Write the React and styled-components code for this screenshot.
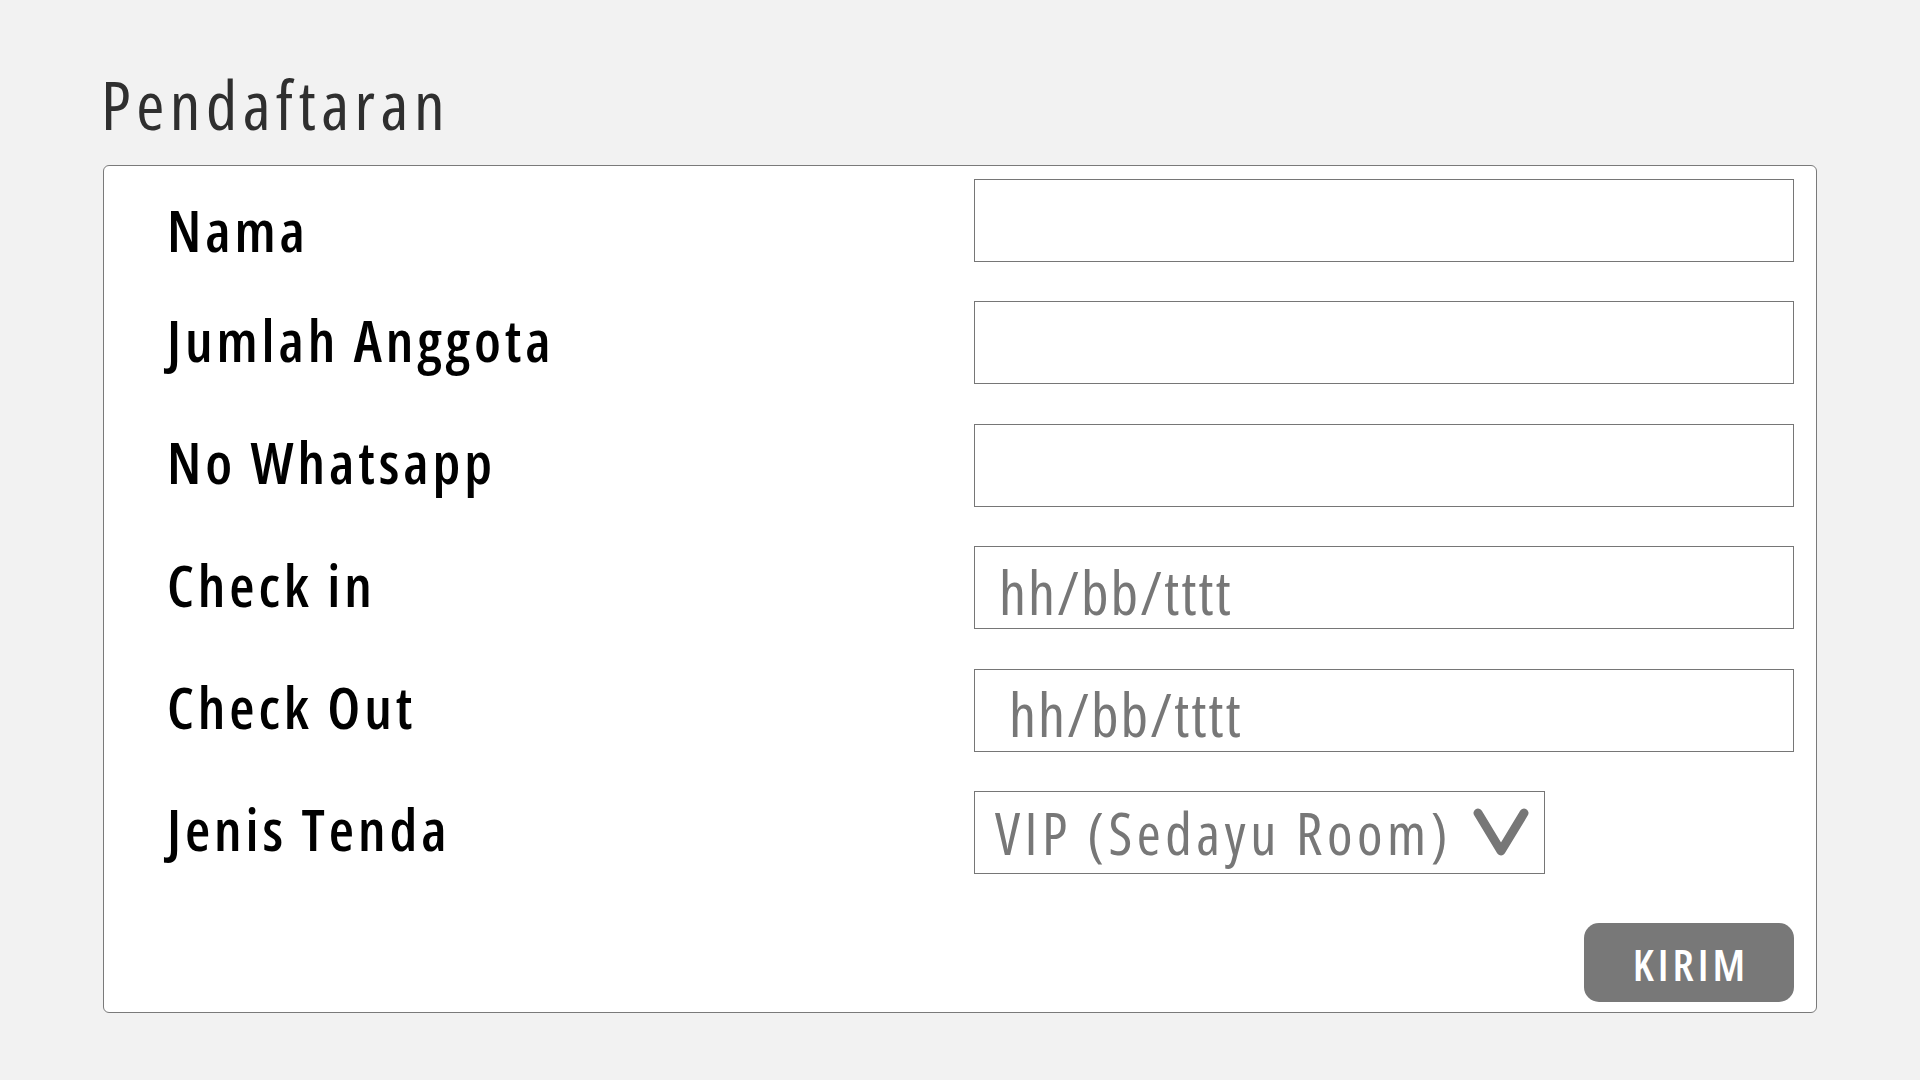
import React from "react";
import styled, { createGlobalStyle } from "styled-components";

const FONT = `"Open Sans", "Liberation Sans", sans-serif`;

const GlobalStyle = createGlobalStyle`
  html, body {
    margin: 0;
    padding: 0;
    background: #f2f2f2;
    font-family: ${FONT};
    font-stretch: 75%;
  }
`;

const Page = styled.div`
  min-height: 1080px;
  box-sizing: border-box;
  padding: 70px 103px 0 103px;
`;

const Title = styled.h1`
  margin: 0 0 27px -2px;
  font-family: ${FONT};
  font-stretch: 75%;
  font-size: 68px;
  line-height: 1;
  font-weight: 400;
  letter-spacing: 5.5px;
  color: #2f2f2f;
`;

const Card = styled.form`
  box-sizing: border-box;
  width: 1714px;
  background: #ffffff;
  border: 1px solid #7a7a7a;
  border-radius: 6px;
  padding: 13px 22px 10px 63px;
  display: flex;
  flex-direction: column;
`;

const Grid = styled.div`
  display: grid;
  grid-template-columns: 1fr 820px;
  grid-auto-rows: 83px;
  row-gap: 39.4px;
`;

const Label = styled.label`
  align-self: center;
  font-family: ${FONT};
  font-stretch: 75%;
  font-size: 58px;
  font-weight: 600;
  line-height: 1;
  letter-spacing: 3.9px;
  color: #000;
  margin-bottom: ${(p) => (p.$shift ? 0 : 6)}px;
  margin-top: ${(p) => p.$shift || 0}px;
`;

const TextField = styled.input`
  box-sizing: border-box;
  width: 100%;
  height: 83px;
  margin: 0;
  border: 1px solid #767676;
  border-radius: 0;
  background: #fff;
  padding: 8px 10px 0 ${(p) => p.$indent || 20}px;
  font-family: ${FONT};
  font-stretch: 75%;
  font-size: 60px;
  letter-spacing: 2px;
  color: #333;
  outline: none;

  &::placeholder {
    color: #777;
    opacity: 1;
  }
`;

const SelectBox = styled.div`
  box-sizing: border-box;
  justify-self: start;
  width: 571px;
  height: 83px;
  border: 1px solid #767676;
  background: #fff;
  display: flex;
  align-items: center;
  padding: 0 0 0 20px;
  gap: 20px;
  cursor: pointer;
  overflow: hidden;
`;

const SelectText = styled.span`
  font-family: ${FONT};
  font-stretch: 75%;
  font-size: 58px;
  line-height: 1;
  letter-spacing: 4.5px;
  color: #777;
  white-space: nowrap;
  margin-top: 2px;
`;

const Chevron = styled.svg`
  width: 58px;
  height: 50px;
  flex: none;
`;

const Footer = styled.div`
  display: flex;
  justify-content: flex-end;
  margin-top: 49px;
`;

const SubmitButton = styled.button`
  width: 210px;
  height: 79px;
  border: none;
  border-radius: 15px;
  background: #787878;
  color: #fff;
  font-family: ${FONT};
  font-stretch: 75%;
  font-size: 44px;
  font-weight: 600;
  letter-spacing: 4px;
  padding: 4px 0 0 4px;
  cursor: pointer;
`;

const FIELDS = [
  { label: "Nama", shift: 18 },
  { label: "Jumlah Anggota" },
  { label: "No Whatsapp" },
  { label: "Check in", placeholder: "hh/bb/tttt", indent: 24 },
  { label: "Check Out", placeholder: "hh/bb/tttt", indent: 34 },
];

export default function App() {
  return (
    <>
      <GlobalStyle />
      <Page>
        <Title>Pendaftaran</Title>
        <Card onSubmit={(e) => e.preventDefault()}>
          <Grid>
            {FIELDS.map((f) => (
              <React.Fragment key={f.label}>
                <Label $shift={f.shift}>{f.label}</Label>
                <TextField
                  type="text"
                  placeholder={f.placeholder || ""}
                  $indent={f.indent}
                />
              </React.Fragment>
            ))}
            <Label>Jenis Tenda</Label>
            <SelectBox>
              <SelectText>VIP (Sedayu Room)</SelectText>
              <Chevron viewBox="0 0 58 50">
                <polyline
                  points="6,6 29,44 52,6"
                  fill="none"
                  stroke="#777"
                  strokeWidth="9"
                  strokeLinecap="round"
                  strokeLinejoin="round"
                />
              </Chevron>
            </SelectBox>
          </Grid>
          <Footer>
            <SubmitButton type="submit">KIRIM</SubmitButton>
          </Footer>
        </Card>
      </Page>
    </>
  );
}
